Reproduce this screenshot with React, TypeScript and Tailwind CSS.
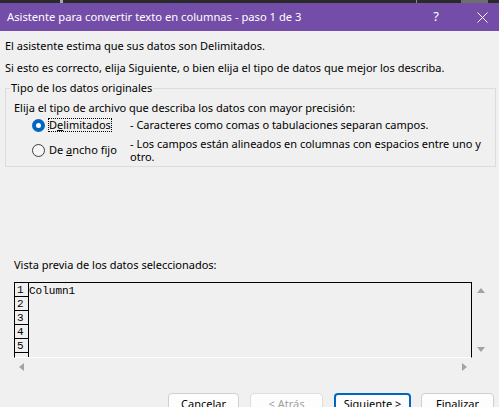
import React from 'react';

const ui = "font-['Noto_Sans',_'Open_Sans',_sans-serif]";
const mono = "font-['Liberation_Mono',_'Courier_New',_monospace]";

function Radio({ checked }: { checked: boolean }) {
  if (checked) {
    return (
      <span className="flex h-[13px] w-[13px] shrink-0 items-center justify-center rounded-full bg-[#0067c0]">
        <span className="h-[5px] w-[5px] rounded-full bg-white" />
      </span>
    );
  }
  return <span className="h-[13px] w-[13px] shrink-0 rounded-full border border-[#3c3c3c] bg-[#f6f6f6]" />;
}

function Tri({ dir }: { dir: 'up' | 'down' | 'left' | 'right' }) {
  const pts = {
    up: '0,5 4,0 8,5',
    down: '0,0 8,0 4,5',
    left: '5,0 5,8 0,4',
    right: '0,0 0,8 5,4',
  }[dir];
  const vert = dir === 'up' || dir === 'down';
  return (
    <svg width={vert ? 8 : 5} height={vert ? 5 : 8} viewBox={vert ? '0 0 8 5' : '0 0 5 8'}>
      <polygon points={pts} fill="#a3a3a3" />
    </svg>
  );
}

function Btn({ label, w, kind }: { label: string; w: string; kind?: 'default' | 'disabled' }) {
  const base = 'flex h-[23px] items-center justify-center rounded-[4px] bg-[#fdfdfd] text-[11px]';
  const cls =
    kind === 'default'
      ? 'border-2 border-[#0067c0] text-black'
      : kind === 'disabled'
      ? 'border border-[#dedede] bg-[#f7f7f7] text-[#a0a0a0]'
      : 'border border-[#d0d0d0] text-black';
  return <div className={`${base} ${cls} ${w}`}>{label}</div>;
}

export default function App() {
  // last row is only partly visible, its number is hidden below the edge
  const rows = ['1', '2', '3', '4', '5', ''];
  return (
    <div className={`relative h-[407px] w-[499px] overflow-hidden bg-[#f0f0f0] text-[11px] text-black ${ui}`}>
      {/* strip of the window behind */}
      <div className="flex h-[3px] bg-[#2a2a2a]">
        <div className="w-[60px]" />
        <div className="w-[3px] bg-[#a8a8a8]" />
        <div className="w-[353px]" />
        <div className="w-[1px] bg-[#8a8a8a]" />
        <div className="w-[44px]" />
        <div className="w-[27px] bg-[#6e6e6e]" />
      </div>

      {/* Title bar */}
      <div className="flex h-[28px] items-center bg-[#744da9] text-white">
        <div className="flex-1 pl-[7px] text-[11.2px] leading-[16px]">Asistente para convertir texto en columnas - paso 1 de 3</div>
        <div className="flex w-[46px] justify-center text-[13px]">?</div>
        <div className="mr-[-6px] flex w-[46px] justify-center">
          <svg width="11" height="11" viewBox="0 0 11 11">
            <path d="M0.5 0.5 L10.5 10.5 M10.5 0.5 L0.5 10.5" stroke="white" strokeWidth="1" />
          </svg>
        </div>
      </div>

      <div className="px-[5px] pt-[7px]">
        <p className="leading-[16px]">El asistente estima que sus datos son Delimitados.</p>
        <p className="mt-[6px] leading-[16px]">Si esto es correcto, elija Siguiente, o bien elija el tipo de datos que mejor los describa.</p>

        {/* Group box */}
        <fieldset className="mt-[4px] w-[491px] border border-[#dcdcdc] pb-[3px] pl-[4px]">
          <legend className="px-[1px] leading-[16px]">Tipo de los datos originales</legend>
          <div className="pl-[4px]">
            <p className="mt-[4px] leading-[16px]">Elija el tipo de archivo que describa los datos con mayor precisión:</p>
            <div className="ml-[18px] mt-[1px] flex flex-col gap-[4px]">
              <div className="flex h-[16px] items-center">
                <div className="flex w-[98px] shrink-0 items-center">
                  <Radio checked />
                  <span className="ml-[3px] border border-dotted border-black leading-[12px]">
                    D<span className="underline">e</span>limitados
                  </span>
                </div>
                <span className="leading-[16px]">- Caracteres como comas o tabulaciones separan campos.</span>
              </div>
              <div className="flex items-center">
                <div className="flex w-[98px] shrink-0 items-center">
                  <Radio checked={false} />
                  <span className="ml-[3px] border border-transparent leading-[12px]">
                    De <span className="underline">a</span>ncho fijo
                  </span>
                </div>
                <span className="leading-[13px]">
                  - Los campos están alineados en columnas con espacios entre uno y
                  <br />
                  otro.
                </span>
              </div>
            </div>
          </div>
        </fieldset>

        <p className="ml-[9px] mt-[90px] leading-[16px]">Vista previa de los datos seleccionados:</p>

        {/* Preview */}
        <div className="ml-[9px] mt-[9px]">
          <div className="flex">
            <div className="flex h-[76px] w-[458px] overflow-hidden border-x border-t border-b border-black border-b-white">
              <div className={`w-[14px] shrink-0 border-r border-black text-[11px] ${mono}`}>
                {rows.map((n, i) => (
                  <div key={i} className="h-[14px] border-b border-black pl-[2px] pt-[1px] leading-[13px]">
                    {n}
                  </div>
                ))}
              </div>
              <div className={`pt-[2px] text-[11px] leading-[13px] ${mono}`}>Column1</div>
            </div>
            <div className="flex h-[76px] w-[18px] flex-col items-center justify-between py-[6px]">
              <Tri dir="up" />
              <Tri dir="down" />
            </div>
          </div>
          <div className="flex h-[18px] w-[458px] items-center justify-between px-[5px]">
            <Tri dir="left" />
            <Tri dir="right" />
          </div>
        </div>

        {/* Buttons */}
        <div className="ml-[163px] mt-[17px] flex">
          <Btn label="Cancelar" w="w-[73px]" />
          <div className="ml-[11px]">
            <Btn label="< Atrás" w="w-[73px]" kind="disabled" />
          </div>
          <div className="ml-[11px]">
            <Btn label="Siguiente >" w="w-[77px]" kind="default" />
          </div>
          <div className="ml-[10px]">
            <Btn label="Finalizar" w="w-[73px]" />
          </div>
        </div>
      </div>
    </div>
  );
}
